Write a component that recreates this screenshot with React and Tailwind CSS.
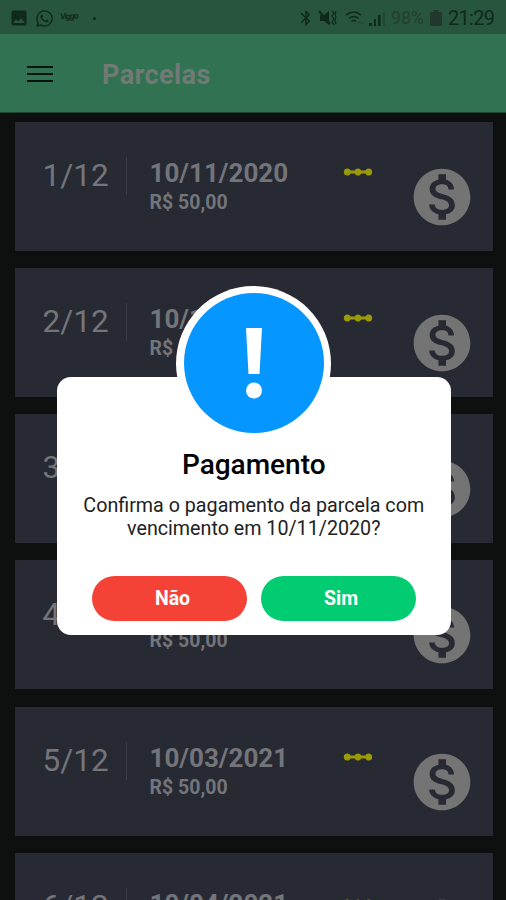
import React from 'react';
import { MdMonetizationOn, MdLinearScale, MdBluetooth, MdImage } from 'react-icons/md';
import { FaWhatsapp } from 'react-icons/fa';

const parcelas = [
  { numero: '1/12', data: '10/11/2020', valor: 'R$ 50,00' },
  { numero: '2/12', data: '10/12/2020', valor: 'R$ 50,00' },
  { numero: '3/12', data: '10/01/2021', valor: 'R$ 50,00' },
  { numero: '4/12', data: '10/02/2021', valor: 'R$ 50,00' },
  { numero: '5/12', data: '10/03/2021', valor: 'R$ 50,00' },
  { numero: '6/12', data: '10/04/2021', valor: 'R$ 50,00' },
];

const StatusBar = () => (
  <div className="flex h-[34px] items-center bg-[#28553e] pl-[9px] pr-[11px] pt-[2px] text-[#10291d]">
    <MdImage className="size-[20px]" />
    <FaWhatsapp className="ml-[6px] size-[19px]" />
    <span className="ml-[6px] w-[20px] -translate-y-[2px] -rotate-3 text-[8.500px] font-bold italic leading-none tracking-[-0.8px]">Viggo</span>
    <span className="ml-[13px] size-[3px] rounded-full bg-[#10291d]" />
    <div className="ml-auto flex items-center">
      <MdBluetooth className="size-[18px]" />
      {/* muted speaker with vibration marks */}
      <svg className="ml-[3px] h-[18px] w-[20px]" viewBox="0 0 20 18" fill="none" stroke="currentColor">
        <path d="M2 6h4l5-4v14l-5-4H2z" fill="currentColor" stroke="none" />
        <path d="M1 2l11 13" strokeWidth="2" />
        <path d="M14 2l2 2-2 3 2 3-2 3 2 3M18 2l-1 3 1 3-1 3 1 4" strokeWidth="1.2" />
      </svg>
      <svg className="ml-[7px] h-[18px] w-[20px]" viewBox="0 0 20 18" fill="none" stroke="currentColor" strokeWidth="1.6">
        <path d="M1 6q8-6 15 0M4 9.500q5-4 9.500 0M6.500 12.500q2-2 4.500 0" />
        <path d="M13 14l3-2M16 15l3-2" strokeWidth="1" opacity="0.4" />
      </svg>
      <svg className="ml-[4px] h-[18px] w-[17px]" viewBox="0 0 17 18" fill="currentColor">
        <path d="M0 14h3v3H0zM5 10h2v7H5zM9 6h2.500v11H9z" />
        <path d="M14 3h2v14h-2z" opacity="0.3" />
      </svg>
      <span className="ml-[5px] w-[35px] text-[18px] leading-none tracking-[-0.2px] text-[#223f30]">98%</span>
      <svg className="ml-[4px] h-[18px] w-[12px]" viewBox="0 0 12 18" fill="#24372d">
        <path d="M3.500 1h5v2H11q1 0 1 1v12q0 1-1 1H1q-1 0-1-1V4q0-1 1-1h2.500z" />
      </svg>
      <span className="ml-[6px] w-[47px] whitespace-nowrap text-[20px] leading-none tracking-[-0.7px]">21:29</span>
    </div>
  </div>
);

const Header = () => (
  <header className="flex h-[78.500px] items-center border-b border-[#1c4532] bg-[#307252] pl-[27px] pt-[2px]">
    <button className="flex w-[26px] flex-col gap-[4.500px]" aria-label="Menu">
      <span className="h-[2.500px] bg-[#06120c]" />
      <span className="h-[2.500px] bg-[#06120c]" />
      <span className="h-[2.500px] bg-[#06120c]" />
    </button>
    <h1 className="ml-[49px] pt-[2px] text-[27px] font-bold tracking-[0.4px] text-[#717a75]">Parcelas</h1>
  </header>
);

const Parcela = ({ numero, data, valor }) => (
  <div className="flex h-[129px] shrink-0 bg-[#272a33] pl-[28px] text-[#73757a]">
    <div className="mt-[35px] flex h-[38px] w-[84px] items-center border-r border-[#393c43] text-[31.500px]">
      {numero}
    </div>
    <div className="ml-[23px] w-[191px] pt-[36px]">
      <p className="text-[26px] font-bold leading-[30px]">{data}</p>
      <p className="text-[19.500px] font-bold leading-[29px]">{valor}</p>
    </div>
    <MdLinearScale className="mt-[33px] size-[34px] text-[#9a9a08]" />
    <MdMonetizationOn className="ml-[33px] mt-[41px] size-[68px] text-[#747474]" />
  </div>
);

const Dialog = () => (
  <div className="absolute left-[57px] top-[377px] flex h-[258px] w-[393.500px] flex-col items-center rounded-[14px] bg-white text-black">
    <div className="absolute -top-[91.500px] left-[119px] flex size-[155px] items-center justify-center rounded-full bg-white">
      <div className="flex size-[140px] items-center justify-center rounded-full bg-[#0596ff]">
        <svg className="h-[71px] w-[16px]" viewBox="0 0 16 71" fill="white">
          <path d="M0 0h16l-2.500 46h-11z" />
          <circle cx="8" cy="62.500" r="8" />
        </svg>
      </div>
    </div>
    <h2 className="mt-[71px] text-[28px] font-medium leading-[34px]">Pagamento</h2>
    <p className="mt-[13px] whitespace-nowrap text-center text-[19.700px] leading-[22.500px] text-[#222]">
      Confirma o pagamento da parcela com
      <br />
      vencimento em 10/11/2020?
    </p>
    <div className="mt-auto mb-[14.500px] flex gap-[13.500px] text-[19.500px] font-bold text-white">
      <button className="h-[45px] w-[155px] rounded-full bg-[#f44336] pl-[6px] pt-[2px]">Não</button>
      <button className="h-[45px] w-[155px] rounded-full bg-[#02cc72] pl-[6px] pt-[2px]">Sim</button>
    </div>
  </div>
);

const App = () => {
  return (
    <div className="relative flex h-[900px] w-[506px] flex-col overflow-hidden bg-[#0e0f0f] font-['Roboto',sans-serif]">
      <StatusBar />
      <Header />
      <main className="flex min-h-0 flex-1 flex-col gap-[17.250px] overflow-hidden pl-[14.500px] pr-[13.500px] pt-[9px]">
        {parcelas.map((parcela) => (
          <Parcela key={parcela.numero} {...parcela} />
        ))}
      </main>
      <Dialog />
    </div>
  );
};

export default App;
